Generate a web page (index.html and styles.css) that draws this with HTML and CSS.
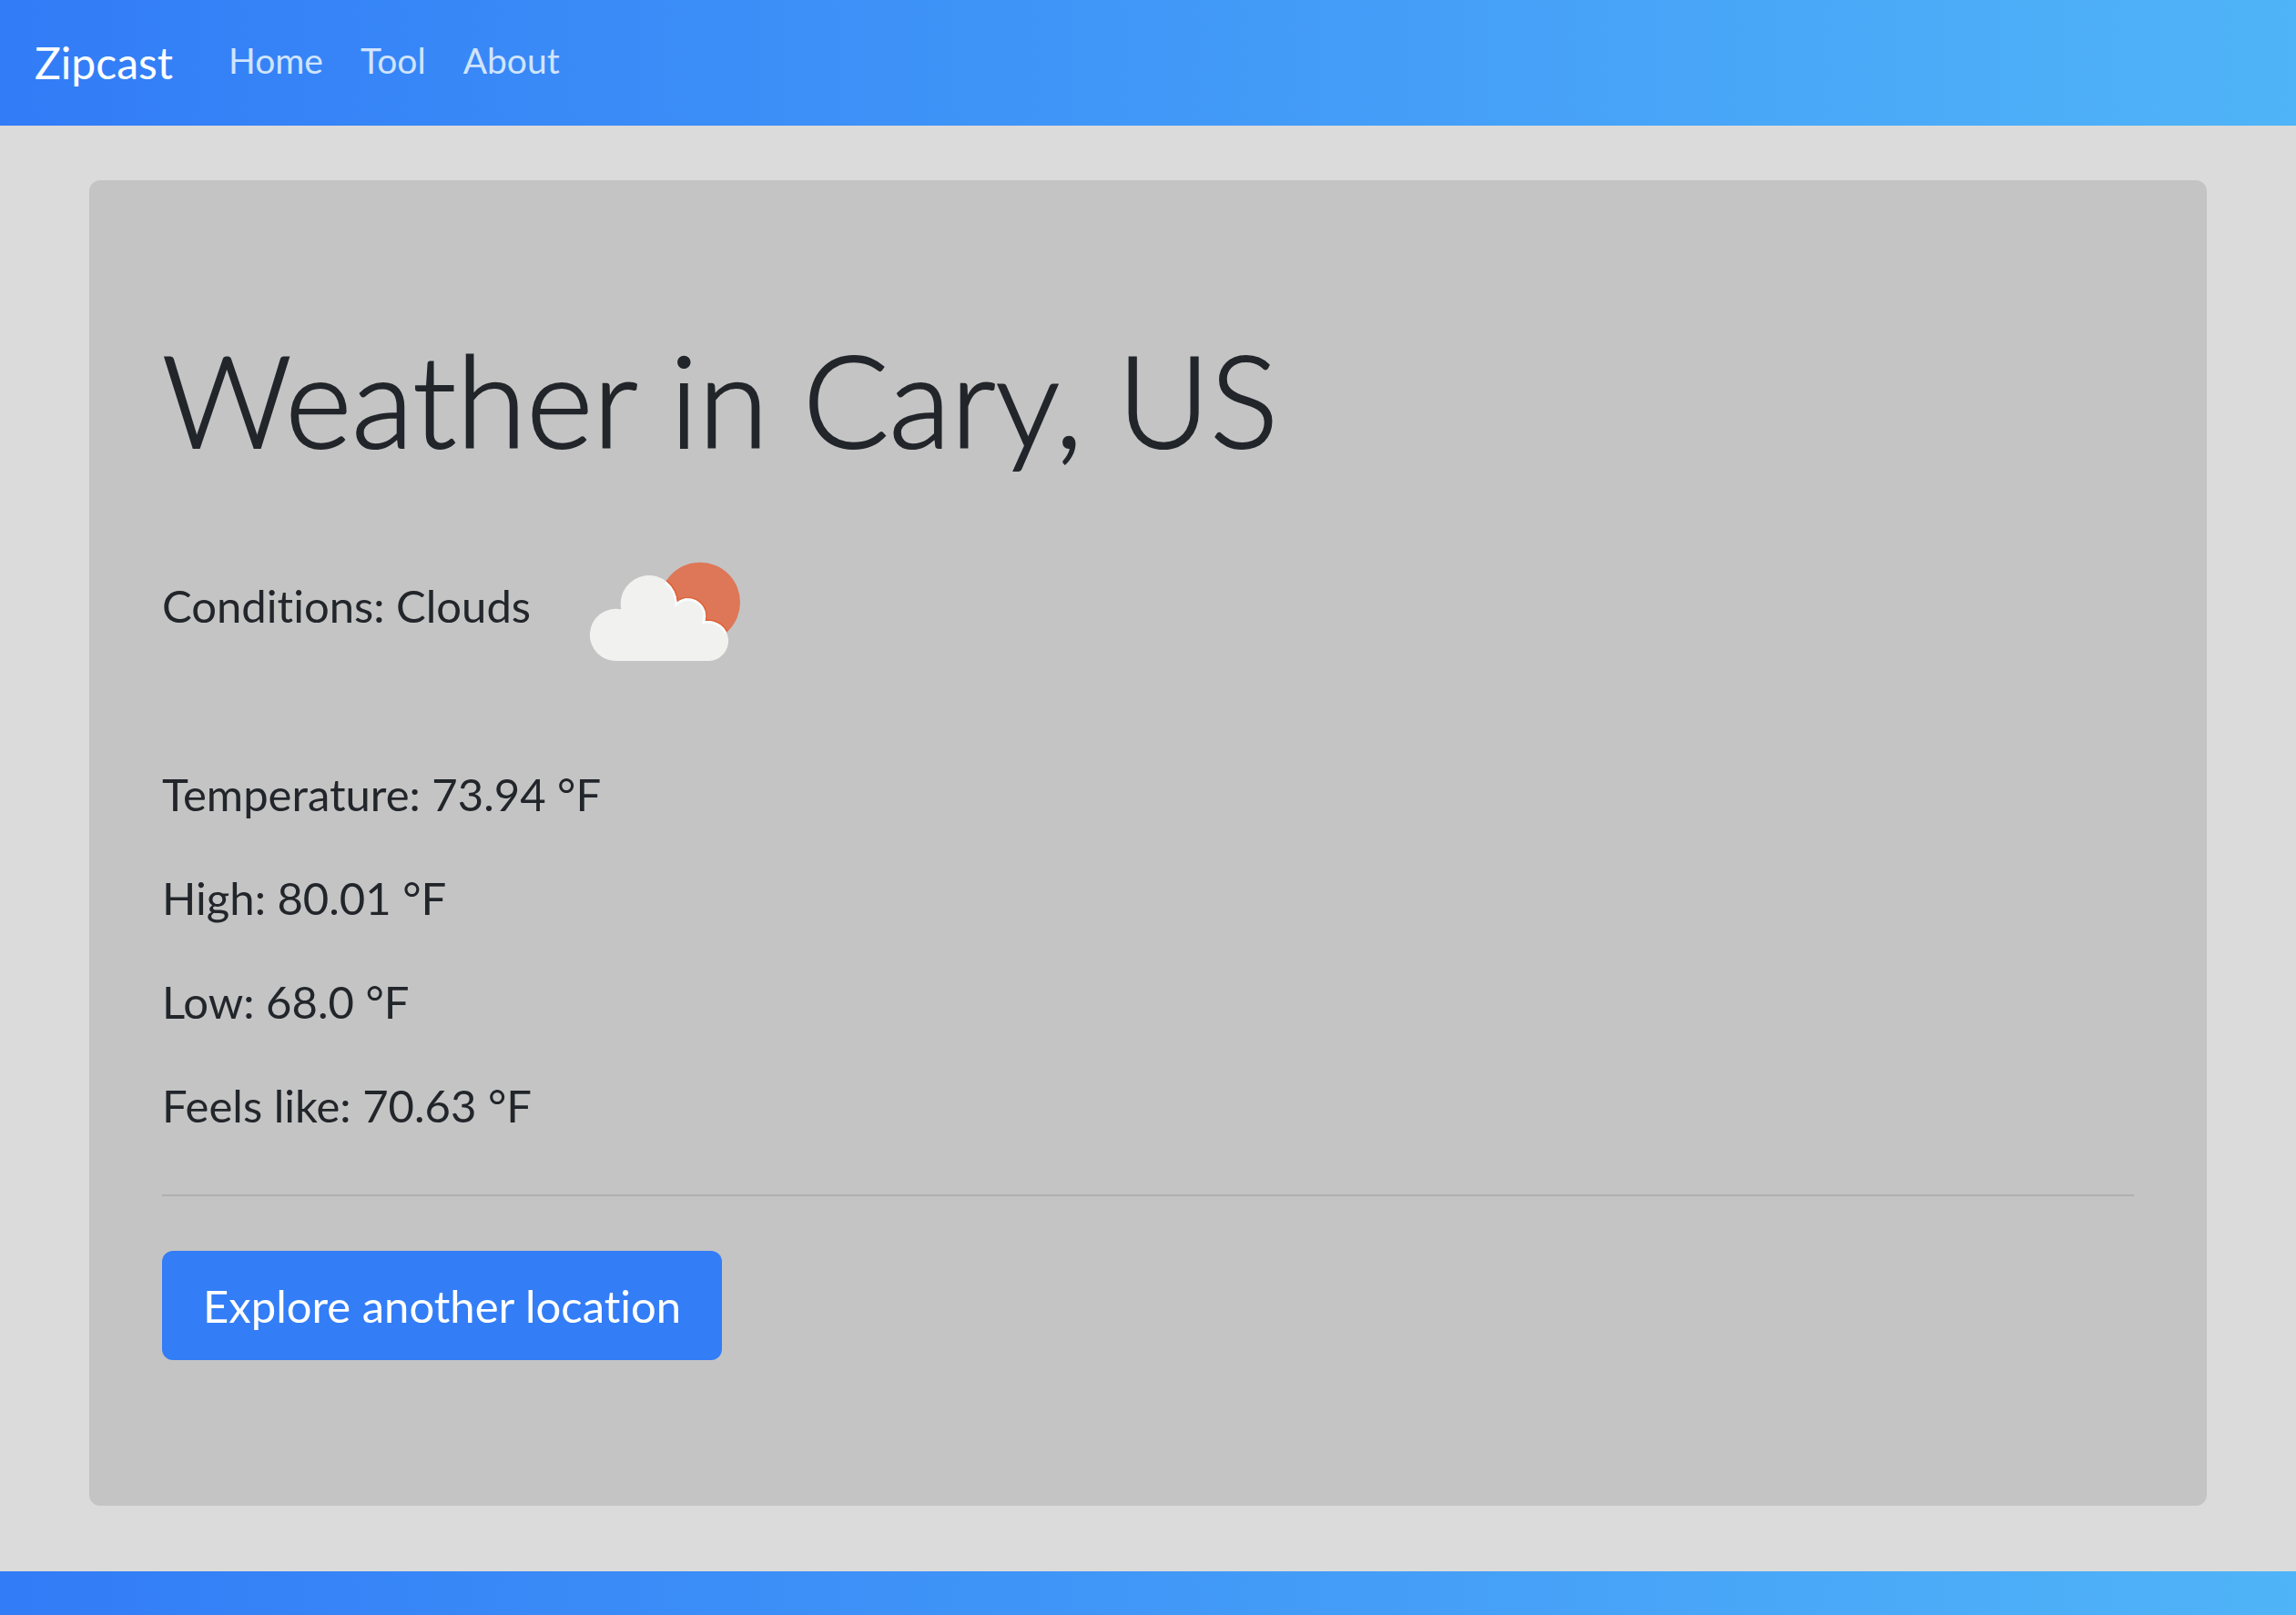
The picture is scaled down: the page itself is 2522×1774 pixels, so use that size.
FILE: index.html
```html
<!DOCTYPE html>
<html lang="en">
<head>
<meta charset="utf-8">
<meta name="viewport" content="width=device-width, initial-scale=1">
<title>Zipcast</title>
<link rel="stylesheet" href="styles.css">
</head>
<body>
<header class="navbar">
  <a class="brand" href="#">Zipcast</a>
  <nav class="nav">
    <a class="nav-link" href="#">Home</a>
    <a class="nav-link" href="#">Tool</a>
    <a class="nav-link" href="#">About</a>
  </nav>
</header>
<main class="main">
  <section class="card">
    <h1 class="title">Weather in Cary, US</h1>
    <div class="conditions">
      <p class="lead">Conditions: Clouds</p>
      <svg class="icon" viewBox="3 -87 600 564" role="img" aria-label="Clouds">
        <defs>
          <clipPath id="sun"><circle cx="414" cy="185" r="132"/></clipPath>
          <path id="cloud" d="M143 378A86 86 0 1 1 154 208A93 93 0 1 1 338 185A58 58 0 0 1 430 247A66 66 0 1 1 443 378Z"/>
          <clipPath id="cloud-clip"><use href="#cloud"/></clipPath>
        </defs>
        <circle cx="414" cy="185" r="132" fill="#de7757"/>
        <g clip-path="url(#sun)"><use href="#cloud" fill="none" stroke="#df6338" stroke-width="10"/></g>
        <use href="#cloud" fill="#f1f1ef"/>
        <g clip-path="url(#sun)"><g clip-path="url(#cloud-clip)"><use href="#cloud" fill="none" stroke="#f7fdff" stroke-width="16"/></g></g>
      </svg>
    </div>
    <div class="readings">
      <p class="lead">Temperature: 73.94 °F</p>
      <p class="lead">High: 80.01 °F</p>
      <p class="lead">Low: 68.0 °F</p>
      <p class="lead">Feels like: 70.63 °F</p>
    </div>
    <hr class="rule">
    <button class="button" type="button">Explore another location</button>
  </section>
</main>
<footer class="footer"></footer>
</body>
</html>
```
FILE: styles.css
```css
* {
  box-sizing: border-box;
}

body {
  margin: 0;
  background: #dbdbdb;
  color: #22262b;
  font-family: Lato, "Liberation Sans", sans-serif;
  font-variant-ligatures: none;
}

.navbar,
.footer {
  background: linear-gradient(90deg, #327cf7, #50b4f8);
}

.navbar {
  display: flex;
  align-items: flex-start;
  gap: 61px;
  height: 138px;
  padding: 32px 38px;
}

.brand {
  color: #fff;
  font-size: 48px;
  line-height: 74px;
  text-decoration: none;
}

.nav {
  display: flex;
  gap: 41px;
}

.nav-link {
  color: #d0e4fd;
  font-size: 39px;
  line-height: 68px;
  text-decoration: none;
}

.main {
  padding: 60px 98px 72px;
}

.card {
  padding: 160px 80px;
  border-radius: 12px;
  background: #c4c4c4;
}

.title {
  margin: 0 0 53px;
  font-size: 140px;
  font-weight: 300;
  line-height: 160px;
  -webkit-text-stroke: 2px currentColor;
}

.conditions {
  display: flex;
  align-items: center;
  gap: 49px;
  margin-bottom: 76px;
}

.icon {
  width: 200px;
  height: 188px;
}

.readings {
  display: grid;
  gap: 40px;
}

.lead {
  margin: 0;
  font-size: 49px;
  line-height: 74px;
}

.rule {
  height: 2px;
  margin: 61px 0 60px;
  border: 0;
  background: #b0b0b0;
}

.button {
  display: block;
  padding: 23px 45px;
  border: 0;
  border-radius: 12px;
  background: #337df7;
  color: #fff;
  font: inherit;
  font-size: 49px;
  font-variant-ligatures: none;
  line-height: 74px;
}

.footer {
  height: 48px;
}
```
